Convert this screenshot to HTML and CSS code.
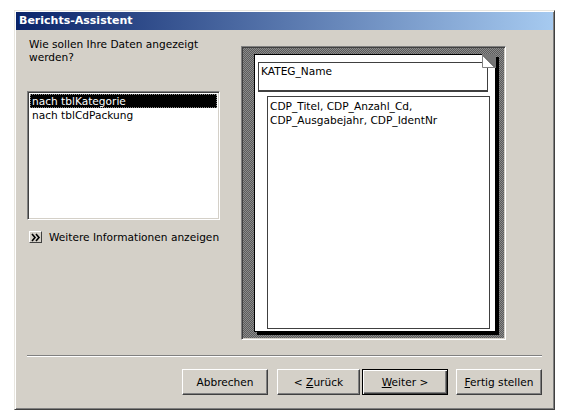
FILE: index.html
```html
<!DOCTYPE html>
<html lang="de">
<head>
<meta charset="utf-8">
<title>Berichts-Assistent</title>
<link rel="stylesheet" href="styles.css">
</head>
<body>
<div class="window">
  <div class="titlebar">Berichts-Assistent</div>
  <div class="body">
    <div class="main">
      <div class="left">
        <p class="question">Wie sollen Ihre Daten angezeigt<br>werden?</p>
        <div class="listbox">
          <div class="item selected">nach tblKategorie</div>
          <div class="item">nach tblCdPackung</div>
        </div>
        <div class="more">
          <span class="more-icon">
            <svg width="11" height="9" viewBox="0 0 11 9"><path d="M2 1l3 3.5-3 3.5M6 1l3 3.5-3 3.5" fill="none" stroke="#000" stroke-width="1.6"/></svg>
          </span>
          <span>Weitere Informationen anzeigen</span>
        </div>
      </div>
      <div class="preview">
        <div class="paper">
          <div class="group-box">KATEG_Name</div>
          <div class="detail-box">CDP_Titel, CDP_Anzahl_Cd,<br>CDP_Ausgabejahr, CDP_IdentNr</div>
          <svg class="dogear" width="14" height="14" viewBox="0 0 14 14">
            <polygon points="0,0 14,0 14,14" fill="#767676"/>
            <polygon points="0,0 14,14 0,14" fill="#fff"/>
            <polyline points="0,0.5 13.5,14" fill="none" stroke="#000" stroke-width="1"/>
            <polyline points="0.5,0 0.5,13.5 14,13.5" fill="none" stroke="#808080" stroke-width="1"/>
          </svg>
        </div>
      </div>
    </div>
    <div class="separator"></div>
    <div class="buttons">
      <button class="btn">Abbrechen</button>
      <button class="btn btn-back">&lt; <u>Z</u>urück</button>
      <button class="btn btn-default"><u>W</u>eiter &gt;</button>
      <button class="btn btn-finish"><u>F</u>ertig stellen</button>
    </div>
  </div>
</div>
</body>
</html>
```
FILE: styles.css
```css
* { box-sizing: border-box; }

html, body {
  margin: 0;
  padding: 0;
  background: #fff;
}

body {
  font-family: "DejaVu Sans", "Liberation Sans", sans-serif;
  font-size: 10.6px;
  color: #000;
}

.window {
  margin: 10px 0 0 14px;
  width: 541px;
  height: 400px;
  background: #d4d0c8;
  border: 1px solid;
  border-color: #e8e6e0 #404040 #404040 #e8e6e0;
  box-shadow: inset 1px 1px 0 #fff, inset -1px -1px 0 #808080;
  padding: 1px;
  display: flex;
  flex-direction: column;
}

.titlebar {
  height: 18px;
  background: linear-gradient(to right, #0a246a, #a6caf0);
  color: #fff;
  font-weight: bold;
  font-size: 11px;
  line-height: 18px;
  padding-left: 3px;
}

.body {
  flex: 1;
  padding: 0 11px;
  display: flex;
  flex-direction: column;
}

.main {
  display: flex;
  align-items: flex-start;
  gap: 21px;
}

.left {
  width: 193px;
  padding-top: 8px;
  display: flex;
  flex-direction: column;
}

.question {
  margin: 0 0 27px 2px;
  line-height: 13px;
}

.listbox {
  height: 129px;
  background: #fff;
  border: 1px solid;
  border-color: #808080 #fff #fff #808080;
  box-shadow: inset 1px 1px 0 #404040, inset -1px -1px 0 #d4d0c8;
  padding: 2px 2px;
}

.item {
  height: 14px;
  line-height: 14px;
  padding-left: 2px;
}

.item.selected {
  background: #000;
  color: #fff;
  outline: 1px dotted #888;
  outline-offset: -1px;
}

.more {
  margin-top: 10px;
  display: flex;
  align-items: center;
  gap: 7px;
  padding-left: 2px;
  height: 14px;
}

.more-icon {
  width: 13px;
  height: 12px;
  display: flex;
  align-items: center;
  justify-content: center;
  border: 1px solid;
  border-color: #fff #404040 #404040 #fff;
  background: #d4d0c8;
}

.preview {
  margin-top: 16px;
  width: 265px;
  height: 294px;
  border: 1px solid;
  border-color: #808080 #fff #fff #808080;
  box-shadow: inset 1px 1px 0 #404040, inset -1px -1px 0 #d4d0c8;
  background: repeating-conic-gradient(#8c8c8c 0 25%, #5c5c5c 0 50%) 0 0 / 2px 2px;
  padding: 7px 0 0 12px;
}

.paper {
  position: relative;
  width: 242px;
  height: 278px;
  background: #fff;
  border: 1px solid #000;
  box-shadow: 3px 3px 0 #000;
  padding: 7px 0 0 3px;
}

.dogear {
  position: absolute;
  top: -1px;
  right: -1px;
}

.group-box {
  width: 230px;
  height: 30px;
  border: 1px solid #404040;
  border-bottom-width: 2px;
  padding: 2px 2px;
  line-height: 13px;
}

.detail-box {
  margin: 4px 0 0 9px;
  width: 223px;
  height: 233px;
  border: 1px solid #404040;
  padding: 2px 2px;
  line-height: 14px;
}

.separator {
  margin-top: 15px;
  height: 2px;
  border-top: 1px solid #808080;
  border-bottom: 1px solid #fff;
}

.buttons {
  margin-top: 12px;
  display: flex;
  justify-content: flex-end;
}

.btn {
  width: 86px;
  height: 26px;
  font: inherit;
  color: #000;
  background: #d4d0c8;
  border: 1px solid;
  border-color: #fff #404040 #404040 #fff;
  box-shadow: inset -1px -1px 0 #808080;
  padding: 0;
  margin-left: 9px;
}

.btn-back {
  width: 83px;
}

.btn-default {
  margin-left: 2px;
  border: 1px solid #000;
  box-shadow: inset 1px 1px 0 #fff, inset -1px -1px 0 #404040, inset -2px -2px 0 #808080;
}

.btn-finish {
  margin-left: 8px;
}
```
